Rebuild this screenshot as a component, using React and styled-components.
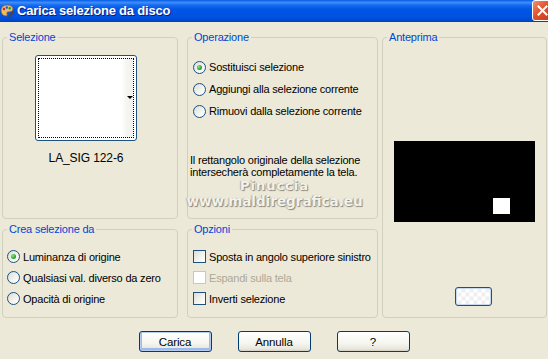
import React from "react";
import styled, { createGlobalStyle, css } from "styled-components";

const GlobalStyle = createGlobalStyle`
  html, body {
    margin: 0;
    padding: 0;
    background: #ECE9D8;
    overflow: hidden;
  }
`;

const Window = styled.div`
  width: 548px;
  height: 359px;
  background: #ECE9D8;
  font-family: "Liberation Sans", Arial, sans-serif;
  font-size: 11px;
  letter-spacing: -0.2px;
  color: #000;
  display: flex;
  flex-direction: column;
  overflow: hidden;
`;

const TitleBar = styled.div`
  height: 21px;
  flex: none;
  display: flex;
  align-items: center;
  overflow: hidden;
  background: linear-gradient(
    to bottom,
    #0A5CE6 0%,
    #3B8EFA 12%,
    #1669F0 25%,
    #0055E5 45%,
    #0052E0 80%,
    #0046CC 100%
  );
  border-bottom: 1px solid #0A3FB0;
`;

const TitleIcon = styled.svg`
  width: 14px;
  height: 14px;
  flex: none;
`;

const TitleText = styled.div`
  flex: 1;
  margin-left: 3px;
  color: #fff;
  font-weight: bold;
  font-size: 13px;
  letter-spacing: -0.2px;
  text-shadow: 1px 1px 0 #0A1E7A;
  white-space: nowrap;
`;

const CloseButton = styled.div`
  width: 21px;
  height: 21px;
  flex: none;
  margin-right: -5px;
  box-sizing: border-box;
  border: 1px solid #fff;
  border-radius: 3px;
  background: linear-gradient(135deg, #F0906E 0%, #E0532F 45%, #C6391A 100%);
  display: flex;
  align-items: center;
  justify-content: center;
`;

const Body = styled.div`
  padding: 9px 0 0 2px;
  display: flex;
  flex-direction: column;
`;

const Groups = styled.div`
  display: grid;
  grid-template-columns: 176px 200px 169px;
  grid-template-rows: 188px 95px;
  row-gap: 4px;
`;

const Group = styled.fieldset`
  position: relative;
  margin: 0;
  padding: 0;
  min-width: 0;
  box-sizing: border-box;
  border: 1px solid #D0D0BF;
  border-radius: 4px;
  ${(p) => p.$width && css`width: ${p.$width}px; justify-self: end;`}
  ${(p) => p.$span && css`grid-row: 1 / span 2; grid-column: 3;`}
  display: flex;
  flex-direction: column;
`;

const Legend = styled.legend`
  color: #0046D5;
  padding: 0 2px;
  margin-left: 4px;
  line-height: 13px;
  font-size: 11px;
`;

const Thumb = styled.div`
  position: relative;
  align-self: center;
  margin: 11px 8px 0 0;
  width: 102px;
  height: 86px;
  box-sizing: border-box;
  border: 1px solid #1C5180;
  border-radius: 3px;
  background: #fff;
  padding: 2px;
`;

const ThumbFocus = styled.div`
  height: 100%;
  box-sizing: border-box;
  border: 1px dotted #000;
  background: linear-gradient(to right, #fff 88%, #F6F6F3 92%, #F0F0EC 100%);
`;

const ThumbArrow = styled.div`
  position: absolute;
  right: 3px;
  top: 40px;
  width: 0;
  height: 0;
  border-left: 3px solid transparent;
  border-right: 3px solid transparent;
  border-top: 3px solid #000;
`;

const ThumbName = styled.div`
  align-self: center;
  margin: 10px 8px 0 0;
  font-size: 12px;
  line-height: 14px;
  letter-spacing: -0.1px;
`;

const Options = styled.div`
  display: flex;
  flex-direction: column;
  margin-top: ${(p) => p.$top}px;
  padding-left: ${(p) => p.$left}px;
`;

const OptionRow = styled.div`
  height: ${(p) => p.$h}px;
  display: flex;
  align-items: center;
  gap: 3px;
  white-space: nowrap;
  color: ${(p) => (p.$disabled ? "#ACA899" : "#000")};
`;

const Radio = styled.span`
  width: 13px;
  height: 13px;
  flex: none;
  box-sizing: border-box;
  border-radius: 50%;
  border: 1px solid #1C5180;
  background: linear-gradient(135deg, #DCDCD7 0%, #F4F4F0 60%, #fff 100%);
  display: flex;
  align-items: center;
  justify-content: center;
  &::after {
    content: "";
    display: ${(p) => (p.$checked ? "block" : "none")};
    width: 5px;
    height: 5px;
    border-radius: 50%;
    background: radial-gradient(circle at 35% 35%, #8CE58C 0%, #2FAA2F 55%, #1A7E1A 100%);
  }
`;

const Check = styled.span`
  width: 13px;
  height: 13px;
  flex: none;
  box-sizing: border-box;
  border: 1px solid ${(p) => (p.$disabled ? "#CAC8BB" : "#1C5180")};
  background: ${(p) =>
    p.$disabled ? "#fff" : "linear-gradient(135deg, #DCDCD7 0%, #F4F4F0 60%, #fff 100%)"};
`;

const Info = styled.div`
  margin: 32px 0 0 2px;
  line-height: 12px;
`;

const Watermark = styled.div`
  position: absolute;
  left: -16px;
  right: 0;
  top: ${(p) => p.$top}px;
  text-align: center;
  font-family: "DejaVu Sans", sans-serif;
  font-weight: bold;
  font-size: ${(p) => p.$size}px;
  line-height: ${(p) => p.$size}px;
  letter-spacing: ${(p) => p.$spacing}px;
  color: #F4F2EA;
  text-shadow: 1px 1px 1px #8A877C, -1px 0 1px #B0AEA4;
  white-space: nowrap;
  pointer-events: none;
`;

const Preview = styled.div`
  align-self: center;
  margin-top: 97px;
  width: 141px;
  height: 81px;
  background: #000;
  position: relative;
`;

const PreviewMark = styled.div`
  position: absolute;
  left: 99px;
  top: 57px;
  width: 17px;
  height: 16px;
  background: #fff;
`;

const SmallButton = styled.div`
  align-self: center;
  margin: 65px 0 0 17px;
  width: 37px;
  height: 19px;
  box-sizing: border-box;
  border: 1px solid #1C5180;
  border-radius: 3px;
  background: repeating-conic-gradient(#EFEFEF 0% 25%, #fff 0% 50%);
  background-size: 8px 8px;
  background-position: center;
  box-shadow: inset 0 0 0 1px #C8D8F0;
`;

const ButtonRow = styled.div`
  display: flex;
  justify-content: center;
  gap: 26px;
  margin: 13px 0 0 -2px;
`;

const Button = styled.button`
  width: 73px;
  height: 21px;
  box-sizing: border-box;
  border: 1px solid #003C74;
  border-radius: 3px;
  font-family: "Liberation Sans", Arial, sans-serif;
  font-size: 11.5px;
  letter-spacing: -0.1px;
  color: #000;
  padding: 0;
  background: linear-gradient(to bottom, #fff 0%, #F5F5F0 60%, #EAE7DC 88%, #D6D0C5 100%);
  ${(p) =>
    p.$default &&
    css`
      box-shadow: inset 0 0 0 1px #B3CCF0, inset 0 -1px 0 2px #9DBBEA;
    `}
`;

function PaletteIcon() {
  return (
    <TitleIcon viewBox="0 0 14 14">
      <path
        d="M7 1 C3 1 1 3.5 1 6.5 C1 9.5 3 12 6 12 C7.5 12 7.5 10.5 7 9.8 C6.5 9 7 8 8.2 8 C11 8 13 7 13 5 C13 2.5 10.5 1 7 1 Z"
        fill="#E8B878"
        stroke="#8A5A28"
        strokeWidth="0.8"
      />
      <circle cx="4" cy="5" r="1.2" fill="#D42020" />
      <circle cx="6.8" cy="3.5" r="1.2" fill="#2060D0" />
      <circle cx="9.8" cy="4.2" r="1.2" fill="#20A020" />
      <circle cx="3.8" cy="8.5" r="1.2" fill="#F0D020" />
      <path d="M9 13 L13 8.5" stroke="#6A3A10" strokeWidth="1.6" />
    </TitleIcon>
  );
}

function CloseIcon() {
  return (
    <svg width="11" height="11" viewBox="0 0 11 11">
      <path d="M1.5 1.5 L9.5 9.5 M9.5 1.5 L1.5 9.5" stroke="#fff" strokeWidth="2" strokeLinecap="square" />
    </svg>
  );
}

function RadioOption({ label, checked, h }) {
  return (
    <OptionRow $h={h}>
      <Radio $checked={checked} />
      <span>{label}</span>
    </OptionRow>
  );
}

function CheckOption({ label, disabled }) {
  return (
    <OptionRow $h={21} $disabled={disabled}>
      <Check $disabled={disabled} />
      <span>{label}</span>
    </OptionRow>
  );
}

export default function App() {
  return (
    <Window>
      <GlobalStyle />
      <TitleBar>
        <PaletteIcon />
        <TitleText>Carica selezione da disco</TitleText>
        <CloseButton>
          <CloseIcon />
        </CloseButton>
      </TitleBar>
      <Body>
        <Groups>
          <Group>
            <Legend>Selezione</Legend>
            <Thumb>
              <ThumbFocus />
              <ThumbArrow />
            </Thumb>
            <ThumbName>LA_SIG 122-6</ThumbName>
          </Group>

          <Group $width={191}>
            <Legend>Operazione</Legend>
            <Options $top={12} $left={5}>
              <RadioOption h={22} checked label="Sostituisci selezione" />
              <RadioOption h={22} label="Aggiungi alla selezione corrente" />
              <RadioOption h={22} label="Rimuovi dalla selezione corrente" />
            </Options>
            <Info>
              Il rettangolo originale della selezione
              <br />
              intersecherà completamente la tela.
            </Info>
            <Watermark $top={135} $size={13} $spacing={1}>
              Pinuccia
            </Watermark>
            <Watermark $top={151} $size={13.5} $spacing={0}>
              www.maldiregrafica.eu
            </Watermark>
          </Group>

          <Group $width={165} $span>
            <Legend>Anteprima</Legend>
            <Preview>
              <PreviewMark />
            </Preview>
            <SmallButton />
          </Group>

          <Group>
            <Legend>Crea selezione da</Legend>
            <Options $top={10} $left={4}>
              <RadioOption h={21} checked label="Luminanza di origine" />
              <RadioOption h={21} label="Qualsiasi val. diverso da zero" />
              <RadioOption h={21} label="Opacità di origine" />
            </Options>
          </Group>

          <Group $width={191}>
            <Legend>Opzioni</Legend>
            <Options $top={10} $left={5}>
              <CheckOption label="Sposta in angolo superiore sinistro" />
              <CheckOption disabled label="Espandi sulla tela" />
              <CheckOption label="Inverti selezione" />
            </Options>
          </Group>
        </Groups>
        <ButtonRow>
          <Button $default>Carica</Button>
          <Button>Annulla</Button>
          <Button>?</Button>
        </ButtonRow>
      </Body>
    </Window>
  );
}
